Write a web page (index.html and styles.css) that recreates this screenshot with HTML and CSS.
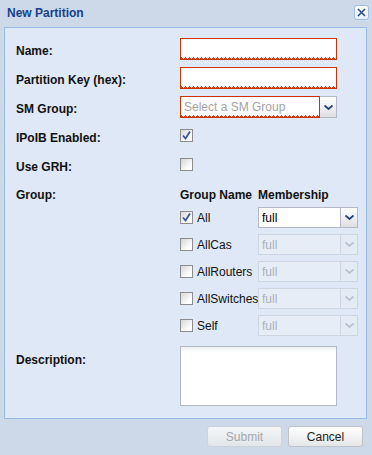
FILE: index.html
```html
<!DOCTYPE html>
<html lang="en">
<head>
  <meta charset="UTF-8" />
  <title>New Partition</title>
  <link rel="stylesheet" href="styles.css">
</head>
<body>
  <div class="win">
    <div class="win-head">
      <span class="win-title">New Partition</span>
      <span class="win-close">
        <svg width="9" height="9" viewBox="0 0 9 9"><path d="M1 1 L8 8 M8 1 L1 8" stroke="#2b4e86" stroke-width="1.6" fill="none"/></svg>
      </span>
    </div>

    <div class="win-body">
      <div class="row r-name">
        <label class="lbl">Name:</label>
        <input type="text" class="field invalid" />
      </div>
      <div class="row r-key">
        <label class="lbl">Partition Key (hex):</label>
        <input type="text" class="field invalid" />
      </div>
      <div class="row r-sm">
        <label class="lbl">SM Group:</label>
        <div class="combo combo-sm">
          <input type="text" class="combo-input invalid" placeholder="Select a SM Group" />
          <span class="trigger"><svg width="9" height="5" viewBox="0 0 9 5"><path d="M0.5 0.5 L4.5 4 L8.5 0.5" stroke="#1f3f78" stroke-width="1.8" fill="none"/></svg></span>
        </div>
      </div>
      <div class="row r-check">
        <label class="lbl lbl-check">IPoIB Enabled:</label>
        <span class="cb checked"><svg width="11" height="11" viewBox="0 0 11 11"><path d="M2 5.5 L4.5 8.5 L9 1.5" stroke="#3a5598" stroke-width="1.8" fill="none"/></svg></span>
      </div>
      <div class="row r-check r-grh">
        <label class="lbl lbl-check">Use GRH:</label>
        <span class="cb"></span>
      </div>

      <div class="row r-group">
        <label class="lbl lbl-group">Group:</label>
        <div class="group-grid">
          <div class="gh">Group Name</div>
          <div class="gh">Membership</div>

          <div class="gname"><span class="cb checked"><svg width="11" height="11" viewBox="0 0 11 11"><path d="M2 5.5 L4.5 8.5 L9 1.5" stroke="#3a5598" stroke-width="1.8" fill="none"/></svg></span>All</div>
          <div class="combo combo-mem">
            <input type="text" class="combo-input" value="full" />
            <span class="trigger"><svg width="9" height="5" viewBox="0 0 9 5"><path d="M0.5 0.5 L4.5 4 L8.5 0.5" stroke="#1f3f78" stroke-width="1.8" fill="none"/></svg></span>
          </div>

          <div class="gname"><span class="cb"></span>AllCas</div>
          <div class="combo combo-mem disabled">
            <input type="text" class="combo-input" value="full" disabled />
            <span class="trigger"><svg width="9" height="5" viewBox="0 0 9 5"><path d="M0.5 0.5 L4.5 4 L8.5 0.5" stroke="#b7c2d2" stroke-width="1.8" fill="none"/></svg></span>
          </div>

          <div class="gname"><span class="cb"></span>AllRouters</div>
          <div class="combo combo-mem disabled">
            <input type="text" class="combo-input" value="full" disabled />
            <span class="trigger"><svg width="9" height="5" viewBox="0 0 9 5"><path d="M0.5 0.5 L4.5 4 L8.5 0.5" stroke="#b7c2d2" stroke-width="1.8" fill="none"/></svg></span>
          </div>

          <div class="gname"><span class="cb"></span>AllSwitches</div>
          <div class="combo combo-mem disabled">
            <input type="text" class="combo-input" value="full" disabled />
            <span class="trigger"><svg width="9" height="5" viewBox="0 0 9 5"><path d="M0.5 0.5 L4.5 4 L8.5 0.5" stroke="#b7c2d2" stroke-width="1.8" fill="none"/></svg></span>
          </div>

          <div class="gname"><span class="cb"></span>Self</div>
          <div class="combo combo-mem disabled">
            <input type="text" class="combo-input" value="full" disabled />
            <span class="trigger"><svg width="9" height="5" viewBox="0 0 9 5"><path d="M0.5 0.5 L4.5 4 L8.5 0.5" stroke="#b7c2d2" stroke-width="1.8" fill="none"/></svg></span>
          </div>
        </div>
      </div>

      <div class="row r-desc">
        <label class="lbl lbl-desc">Description:</label>
        <textarea class="desc"></textarea>
      </div>
    </div>

    <div class="win-foot">
      <button class="btn" disabled>Submit</button>
      <button class="btn">Cancel</button>
    </div>
  </div>
</body>
</html>
```

FILE: styles.css
```css
body {
  margin: 0;
  font-family: "Liberation Sans", Arial, sans-serif;
  font-size: 12px;
  background: #cdd9e8;
}

/* Window frame */
.win {
  width: 372px;
  height: 455px;
  box-sizing: border-box;
  background: #cdd9e8;
  display: flex;
  flex-direction: column;
}

.win-head {
  height: 27px;
  display: flex;
  align-items: flex-start;
  justify-content: space-between;
}
.win-title {
  padding: 6px 0 0 7px;
  font-weight: 700;
  font-size: 12px;
  line-height: 15px;
  color: #15428b;
}
.win-close {
  margin: 5px 3px 0 0;
  width: 15px;
  height: 15px;
  box-sizing: border-box;
  border: 1px solid #9fbde3;
  border-radius: 3px;
  background: linear-gradient(#ffffff, #e8eff9);
  display: flex;
  align-items: center;
  justify-content: center;
}

/* Body panel */
.win-body {
  margin-left: 4px;
  width: 363px;
  height: 392px;
  box-sizing: border-box;
  border: 1px solid #99bbe8;
  background: #dfe8f6;
  padding: 10px 0 0 11px;
}

.row {
  display: flex;
  align-items: flex-start;
}
.r-name, .r-key { margin-bottom: 7px; }
.r-sm { margin-bottom: 11px; }
.r-check { margin-bottom: 12px; }
.r-grh { margin-bottom: 13px; }
.r-group { margin-bottom: 10px; }

.lbl {
  width: 164px;
  flex-shrink: 0;
  font-weight: 700;
  font-size: 12px;
  line-height: 15px;
  color: #111;
  padding-top: 6px;
}
.lbl-check { padding-top: 2px; }
.lbl-group { padding-top: 0; }
.lbl-desc { padding-top: 7px; }

/* Text fields */
.field, .combo-input, .desc {
  box-sizing: border-box;
  margin: 0;
  font-family: "Liberation Sans", Arial, sans-serif;
  font-size: 12px;
  color: #000;
  border: 1px solid #b5b8c8;
  background: #fff;
  outline: none;
  padding: 0 3px;
}
.field {
  width: 157px;
  height: 22px;
}
.invalid {
  border-color: #cc3300;
  background-color: #fff;
  background-image:
    linear-gradient(45deg, #e04020 25%, transparent 25%),
    linear-gradient(-45deg, #e04020 25%, transparent 25%);
  background-size: 4px 4px;
  background-position: 0 100%;
  background-repeat: repeat-x;
}

/* Combo boxes */
.combo {
  display: flex;
  height: 22px;
}
.combo-input {
  height: 100%;
  flex: 1;
  min-width: 0;
}
.combo-input::placeholder {
  color: #a3a3a3;
}
.trigger {
  width: 17px;
  box-sizing: border-box;
  border: 1px solid #b5b8c8;
  border-left: none;
  background: linear-gradient(#ffffff, #dedfe2);
  display: flex;
  align-items: center;
  justify-content: center;
}
.combo-sm { width: 157px; }
.combo-mem { width: 100px; height: 21px; }

.combo.disabled .combo-input {
  background: #e7edf6;
  border-color: #ccd6e3;
  color: #a9b1bd;
}
.combo.disabled .trigger {
  background: #e4ebf4;
  border-color: #ccd6e3;
}

/* Checkboxes */
.cb {
  width: 13px;
  height: 13px;
  box-sizing: border-box;
  border: 1px solid #8d8d8d;
  background: linear-gradient(135deg, #d6d6d6, #ffffff 75%);
  display: inline-flex;
  align-items: center;
  justify-content: center;
  flex-shrink: 0;
}

/* Group membership grid */
.group-grid {
  display: grid;
  grid-template-columns: 78px 100px;
  grid-template-rows: 13px repeat(5, 21px);
  row-gap: 6px;
}
.gh {
  font-weight: 700;
  font-size: 12px;
  line-height: 15px;
  color: #111;
  white-space: nowrap;
}
.gname {
  display: flex;
  align-items: center;
  gap: 4px;
  font-size: 12px;
  color: #111;
  white-space: nowrap;
}

/* Description */
.desc {
  width: 157px;
  height: 60px;
  resize: none;
  background: linear-gradient(#eef1f1, #ffffff 6px);
}

/* Footer buttons */
.win-foot {
  display: flex;
  justify-content: flex-end;
  gap: 6px;
  padding: 7px 9px 0 0;
}
.btn {
  width: 75px;
  height: 21px;
  box-sizing: border-box;
  font-family: "Liberation Sans", Arial, sans-serif;
  font-size: 12px;
  color: #222;
  border: 1px solid #c0c4c8;
  border-radius: 3px;
  background: linear-gradient(#ffffff, #e4e6e8);
  padding: 0;
}
.btn:disabled {
  color: #a2a8b0;
  border-color: #cdd3da;
  background: linear-gradient(#f4f6f8, #e2e6ea);
}
```
